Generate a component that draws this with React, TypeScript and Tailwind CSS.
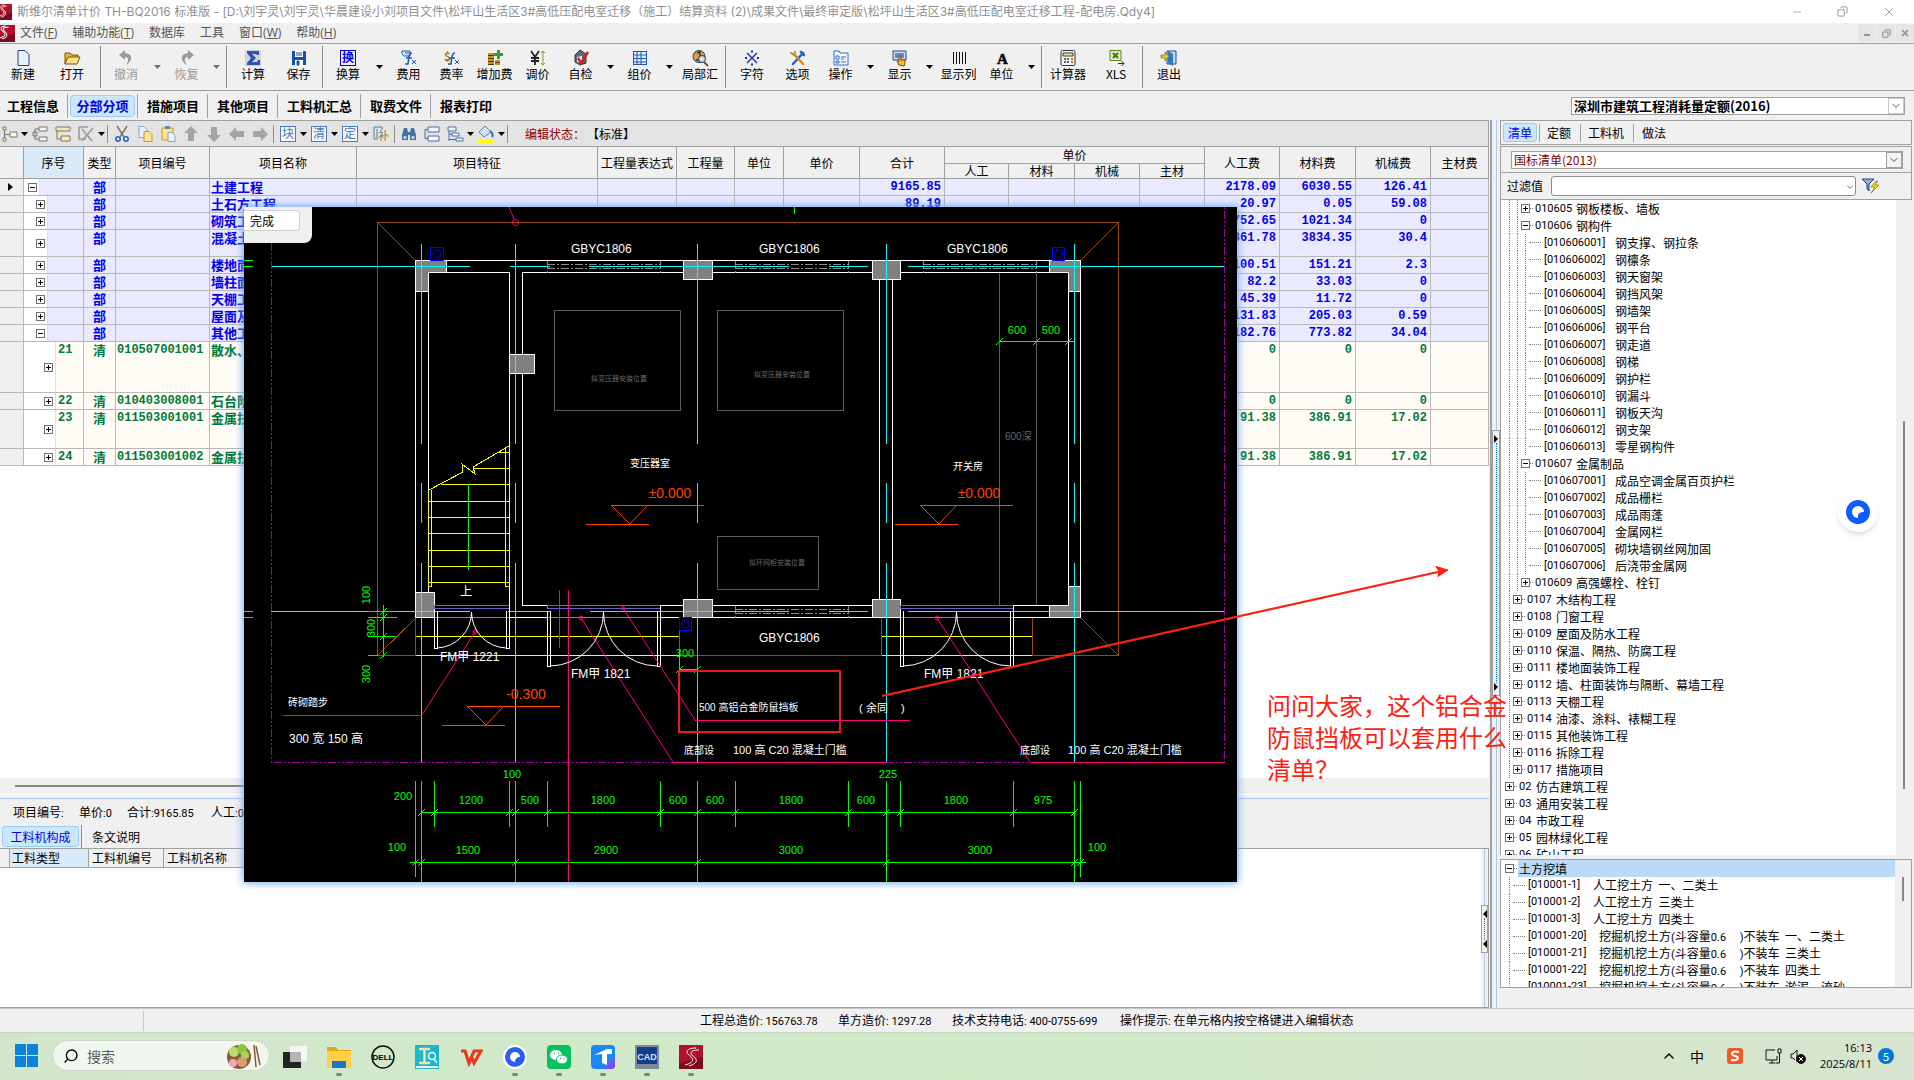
import { Fragment, ReactNode } from "react";
import { ChevronDown, ChevronUp, Search, X, Minus, Copy } from "lucide-react";

const uiFont = "font-['Noto_Sans_CJK_SC',sans-serif]";

/* ---------- shared bits ---------- */

// ASCII runs are set half-width next to the full-width Chinese glyphs
function Mixed({ text }: { text: string }) {
  return (
    <>
      {text.split(/([\x20-\x7e]+)/).map((part, i) =>
        i % 2 ? (
          <span key={i} className="font-['Roboto',sans-serif] text-[11px] whitespace-pre">
            {part}
          </span>
        ) : (
          <Fragment key={i}>{part}</Fragment>
        )
      )}
    </>
  );
}

function Caret({ dim }: { dim?: boolean }) {
  return (
    <svg viewBox="0 0 7 4" className={dim ? "w-[7px] h-1 fill-gray-500" : "w-[7px] h-1 fill-black"}>
      <path d="M0 0h7L3.500 4z" />
    </svg>
  );
}

function Expander({ open }: { open: boolean }) {
  return (
    <button aria-label={open ? "折叠" : "展开"} className="w-[9px] h-[9px] shrink-0 bg-white">
      <svg viewBox="0 0 9 9" className="w-[9px] h-[9px] block" fill="none" shapeRendering="crispEdges">
        <rect x="0.5" y="0.5" width="8" height="8" stroke="#707070" />
        <path d={open ? "M2 4.500h5" : "M2 4.500h5M4.500 2v5"} stroke="#000" />
      </svg>
    </button>
  );
}

function AppLogo({ className }: { className: string }) {
  return (
    <svg viewBox="0 0 16 16" className={className} preserveAspectRatio="none">
      <rect width="16" height="16" fill="#b0122c" />
      <path d="M0 12l16 -4v8H0z" fill="#7d0a1e" />
      <path d="M6 1C0 1 0 4 3 6s4 5 -3 6M9 2C3 2 2 4 5 6s4 6 -3 7" stroke="#fff" fill="none" strokeWidth="1" />
    </svg>
  );
}

/* ---------- toolbar icons ---------- */

const icons: Record<string, ReactNode> = {
  new: <path d="M3 .5h7l4 4v11H3z" fill="#e8f2ff" stroke="#24407c" />,
  open: (
    <g stroke="#7a5200">
      <path d="M1 14V3h5l2 2h6v3" fill="#e9b83a" />
      <path d="M1 14l3-7h12l-3 7z" fill="#ffe08a" />
    </g>
  ),
  undo: <path d="M7 0L1 5l6 5V7c4 0 4 4 1 8 6-3 8-11-1-12z" fill="#9a9a9a" />,
  redo: <path d="M9 0l6 5-6 5V7c-4 0-4 4-1 8C2 12 0 4 9 3z" fill="#9a9a9a" />,
  sum: (
    <g>
      <rect width="16" height="16" fill="#d3d3d3" />
      <path d="M2 1h12v4h-2l-1-1H7l4 4-4 4h5l1-2h2v5H2v-2l4-5-4-5z" fill="#2a55b8" />
    </g>
  ),
  save: (
    <g>
      <path d="M1 1h13l1 1v13H1z" fill="#174fa8" />
      <path d="M4 1h8v6H4zM4 10h8v5H4z" fill="#fff" />
      <path d="M5 3h6M5 5h6M6 11h2v4H6z" stroke="#174fa8" fill="#174fa8" />
    </g>
  ),
  conv: (
    <g>
      <rect x=".5" y=".5" width="15" height="15" fill="#e9f4ff" stroke="#0000e8" />
      <text x="2" y="12" fontSize="12" fontWeight="700" fill="#0000e8">换</text>
    </g>
  ),
  fee: (
    <g fill="none" stroke="#1b57b8">
      <path d="M1 1h8v5H3L1 4zM4 3h4" fill="#dfe9fb" />
      <path d="M11 3c-3 0-3 3-4 11H4M5 8h6" strokeWidth="1.500" />
      <path d="M11 10l4 4M15 10l-4 4" />
    </g>
  ),
  rate: (
    <g fill="none" stroke="#1b57b8">
      <text x="0" y="11" fontSize="12" fontWeight="700" fill="#b87a10" stroke="none">$</text>
      <path d="M11 3c-3 0-3 3-4 11H4M5 8h6" strokeWidth="1.500" />
      <path d="M11 10l4 4M15 10l-4 4" />
    </g>
  ),
  addfee: (
    <g>
      <path d="M10 0h3v3h3v3h-3v3h-3V6H7V3h3z" fill="#3f9440" />
      <path d="M1 4h6M1 7h6M1 10h6M1 13h6M8 11h5M8 14h5" stroke="#c8901c" strokeWidth="2" />
      <path d="M1 5.500h6M1 8.500h6M1 11.500h6M1 14.500h6M8 12.500h5" stroke="#54370a" />
    </g>
  ),
  price: (
    <g fill="none">
      <path d="M1 1l4 6 4-6M5 7v8M1 8h8M1 11h8" stroke="#222" strokeWidth="1.800" />
      <path d="M13 1v14M11 3l2-2 2 2M11 13l2 2 2-2" stroke="#7aa81c" />
    </g>
  ),
  check: (
    <g>
      <path d="M2 5l5-5 6 4v9l-6 2-5-3z" fill="#5b6a86" stroke="#333" />
      <path d="M4 7l5-1v7l-5-1z" fill="#e5e9f2" />
      <path d="M5 8l3 5 7-11" stroke="#d81c1c" strokeWidth="2.500" fill="none" />
    </g>
  ),
  group: (
    <g fill="none" stroke="#1b57b8">
      <rect x="1.500" y="1.500" width="13" height="13" fill="#e4eefc" />
      <path d="M1 5h14M1 8.500h14M1 12h14M5 2v13M9 2v13" />
    </g>
  ),
  local: (
    <g>
      <circle cx="7" cy="6.500" r="6" fill="#d4a14a" stroke="#333" />
      <path d="M5 3l3-1v8M4 10h6" stroke="#333" strokeWidth="1.500" fill="none" />
      <circle cx="10" cy="9" r="3.500" fill="#cfe0f4" stroke="#335" />
      <path d="M12 12l4 4" stroke="#8a4a1c" strokeWidth="2" />
    </g>
  ),
  chars: (
    <g stroke="#16309c" strokeWidth="1.400">
      <path d="M3 3l10 10M13 3L3 13" />
      <path d="M7 1.500h2M7 14.500h2M1 8h2M13 8h2" strokeWidth="2" />
    </g>
  ),
  options: (
    <g fill="none" strokeLinecap="round">
      <path d="M3 14L13 3M11 2l3 3" stroke="#2268b8" strokeWidth="2.500" />
      <path d="M4 4l9 10" stroke="#c8901c" strokeWidth="2.500" />
      <path d="M1 3l3 2 1-3" stroke="#c8901c" strokeWidth="2" />
    </g>
  ),
  action: (
    <g fill="none" stroke="#2e6fc4">
      <path d="M1 15V1h5l1 2h8v12z" fill="#f3f8ff" />
      <path d="M3 6h3v3H3zM3 11h3v2H3zM8 7h5M8 9h3M8 12h5" />
    </g>
  ),
  show: (
    <g>
      <path d="M1 1h13v9H1z" fill="#cfdff6" stroke="#2b3f8c" />
      <path d="M3 3h9v5H3z" fill="#5d8ad6" />
      <path d="M7 15l-2-4 2 0V6h2v4h4v3l-1 3z" fill="#f2b648" stroke="#7a5200" />
    </g>
  ),
  cols: <path d="M2.500 2v12M5.500 2v12M8.500 2v12M11.500 2v12M14.500 2v12" stroke="#111" />,
  unit: (
    <g>
      <text x="3" y="14" fontSize="15" fontWeight="700" fontFamily="Liberation Serif, serif" stroke="#000" strokeWidth=".5">A</text>
    </g>
  ),
  calc: (
    <g>
      <rect x="1" y=".5" width="14" height="15" rx="1.500" fill="#f4f4f4" stroke="#333" />
      <path d="M3 3h10v3H3z" fill="#fbe0a4" stroke="#333" />
      <path d="M4 9h2M7 9h2M4 12h2M7 12h2" stroke="#333" strokeWidth="1.500" />
      <path d="M11 9h2M11 12h2" stroke="#e06a10" strokeWidth="2" />
    </g>
  ),
  xls: (
    <g>
      <path d="M2 .5h11v10H2z" fill="#dcebc0" stroke="#5c8a1c" />
      <path d="M5 3l5 5M10 3L5 8" stroke="#3d7a10" strokeWidth="2" />
      <path d="M10 13.500h6M13.500 11l2.500 2.500-2.500 2.500" stroke="#333" fill="none" />
    </g>
  ),
  exit: (
    <g>
      <path d="M6 1h9v13H6z" fill="#bcd8f2" stroke="#1c4c94" />
      <path d="M7 1l5 3v12l-5-3z" fill="#2c7ac0" />
      <path d="M0 5h4V2l4 4.500L4 11V8H0z" fill="#f2c02c" stroke="#7a5200" strokeWidth=".6" />
    </g>
  ),
};

function Icon({ name }: { name: string }) {
  return (
    <svg viewBox="0 0 16 16" className="w-4 h-4 block overflow-visible">
      {icons[name]}
    </svg>
  );
}

type Tool = { icon?: string; label?: string; w?: string; caret?: boolean; dim?: boolean; sep?: boolean };

const tools: Tool[] = [
  { icon: "new", label: "新建", w: "w-[46px]" },
  { icon: "open", label: "打开", w: "w-[52px]" },
  { sep: true },
  { icon: "undo", label: "撤消", w: "w-[46px]", caret: true, dim: true },
  { icon: "redo", label: "恢复", caret: true, dim: true },
  { sep: true },
  { icon: "sum", label: "计算", w: "w-12" },
  { icon: "save", label: "保存" },
  { sep: true },
  { icon: "conv", label: "换算", w: "w-[46px]", caret: true },
  { icon: "fee", label: "费用" },
  { icon: "rate", label: "费率" },
  { icon: "addfee", label: "增加费" },
  { icon: "price", label: "调价" },
  { icon: "check", label: "自检", caret: true },
  { icon: "group", label: "组价", caret: true },
  { icon: "local", label: "局部汇", w: "w-[46px]" },
  { sep: true },
  { icon: "chars", label: "字符", w: "w-12" },
  { icon: "options", label: "选项" },
  { icon: "action", label: "操作", caret: true },
  { icon: "show", label: "显示", caret: true },
  { icon: "cols", label: "显示列" },
  { icon: "unit", label: "单位", caret: true },
  { sep: true },
  { icon: "calc", label: "计算器", w: "w-12" },
  { icon: "xls", label: "XLS", w: "w-12" },
  { sep: true },
  { icon: "exit", label: "退出", w: "w-12" },
];

function MainToolbar() {
  return (
    <div className="h-[47px] shrink-0 flex items-stretch bg-[#f0f0f0] border-b border-[#a0a0a0]">
      {tools.map((t, i) =>
        t.sep ? (
          <div key={i} className="w-px mx-0.5 my-0.5 bg-[#8c8c8c]" />
        ) : (
          <Fragment key={i}>
            <button
              className={`${t.w ?? "w-[43px]"} pt-1.5 flex flex-col items-center whitespace-nowrap leading-4 ${
                t.dim ? "text-[#9a9a9a]" : ""
              }`}
            >
              <Icon name={t.icon!} />
              {t.label}
            </button>
            {t.caret && (
              <button aria-label={`${t.label}菜单`} className="w-4 flex items-center justify-center">
                <Caret dim={t.dim} />
              </button>
            )}
          </Fragment>
        )
      )}
    </div>
  );
}

/* ---------- edit toolbar ---------- */

const grayArrow = "M8 0l7 7h-4v8H5V7H1z";

const editIcons: Record<string, ReactNode> = {
  tree1: <path d="M1 1h3v3H1zM1 12h3v3H1zM8 6h7v5H8zM2.500 4v8M3 8.500h5" fill="#fff8d8" stroke="#777" />,
  tree2: <path d="M7 1h8v4H7zM7 11h8v4H7zM3 3h4M3 13h4M3 3v10M1 6h4v4H1z" fill="#f4f4f4" stroke="#777" />,
  tree3: <path d="M1 1h14v4H1zM6 10h9v5H6zM2 5v8h4" fill="#fbe7b0" stroke="#777" />,
  del: <path d="M1 1h9M1 1v12h7M4 3l10 12M15 2L4 15" fill="none" stroke="#9a9a9a" strokeWidth="1.600" />,
  cut: (
    <g fill="none">
      <path d="M3 0l7 11M13 0L6 11" stroke="#777" strokeWidth="1.500" />
      <circle cx="4" cy="13" r="2.200" stroke="#2667c0" strokeWidth="1.600" />
      <circle cx="12" cy="13" r="2.200" stroke="#2667c0" strokeWidth="1.600" />
    </g>
  ),
  copy: (
    <g>
      <path d="M2 .5h5l3 3v8H2z" fill="#eaf3ff" stroke="#7ea6d8" />
      <path d="M7 5.500h5l3 3v7H7z" fill="#ffe694" stroke="#c49a28" />
    </g>
  ),
  paste: (
    <g>
      <path d="M2 2h11v12H2z" fill="#fbe48c" stroke="#c49a28" />
      <path d="M5 0h5v3H5z" fill="#4f8ad0" />
      <path d="M8 6.500h4l3 3v6H8z" fill="#eaf3ff" stroke="#7ea6d8" />
    </g>
  ),
  up: <path d={grayArrow} fill="#a4a4a4" />,
  down: <path d={grayArrow} fill="#a4a4a4" transform="rotate(180 8 8)" />,
  left: <path d={grayArrow} fill="#a4a4a4" transform="rotate(270 8 8)" />,
  right: <path d={grayArrow} fill="#a4a4a4" transform="rotate(90 8 8)" />,
  find: (
    <g fill="#47709f">
      <path d="M3 2h3l1 4v8H1V9zM10 2h3l2 7v5H9V6zM6 6h4v3H6z" />
      <path d="M2.500 10h3v3h-3zM10.500 10h3v3h-3z" fill="#bcd2ea" />
    </g>
  ),
  rows: <path d="M4 1h11v5H4zM4 10h11v5H4zM1 3.500h3M1 3.500v9M1 12.500h3" fill="#f1f6fd" stroke="#4a6ea8" />,
  levels: <path d="M1 1h8v4H1zM5 7h7v3H5zM9 12h7v3H9zM2 5v10M2 8h3M2 13.500h7" fill="#f1f6fd" stroke="#4a6ea8" />,
  fill: (
    <g>
      <path d="M7 0L1 6l5 5 7-5z" fill="#d4e2f2" stroke="#5c7ea8" />
      <path d="M12 5c3 2 3 5 2 6" stroke="#2667c0" strokeWidth="2" fill="none" />
      <path d="M0 13h16v4H0z" fill="#ffff00" />
    </g>
  ),
};

function glyphIcon(ch: string) {
  return (
    <g>
      <rect x=".5" y=".5" width="15" height="15" fill="#f3f8ff" stroke="#4d7cb8" />
      <text x="2" y="12" fontSize="12" fill="#4d7cb8">{ch}</text>
    </g>
  );
}
editIcons.block = glyphIcon("块");
editIcons.list = glyphIcon("清");
editIcons.quota = glyphIcon("定");
editIcons.patch = (
  <g>
    <path d="M1 1h8v3M1 1v12h4M4 3v9" fill="none" stroke="#4d7cb8" />
    <rect x="5" y="4" width="11" height="12" rx="4" fill="#fbe7a0" />
    <text x="5" y="14" fontSize="11" fill="#4d7cb8">补</text>
  </g>
);

const editTools = [
  "tree1", "v", "tree2", "tree3", "del", "v", "|", "cut", "copy", "paste", "up", "down", "left", "right", "|",
  "block", "v", "list", "v", "quota", "v", "patch", "|", "find", "rows", "levels", "v", "fill", "v", "|",
];

function EditToolbar() {
  return (
    <div className="h-[27px] shrink-0 flex items-center bg-[#e3e3e3] border border-l-0 border-[#a0a0a0]">
      {editTools.map((t, i) =>
        t === "|" ? (
          <div key={i} className="w-px h-[18px] mx-[2px] bg-[#8c8c8c]" />
        ) : t === "v" ? (
          <button key={i} aria-label="更多" className="w-2 h-5 flex items-center justify-center">
            <Caret />
          </button>
        ) : (
          <button
            key={i}
            aria-label={t}
            className={`${i === 0 ? "w-5" : "w-[23px]"} h-5 flex items-center justify-center`}
          >
            <svg viewBox="0 0 16 16" className="w-4 h-4 overflow-visible">
              {editIcons[t]}
            </svg>
          </button>
        )
      )}
      <span className="ml-[15px] text-[#900000]">编辑状态：</span>
      <span className="ml-[2px]">【标准】</span>
    </div>
  );
}

/* ---------- main grid ---------- */

const colWidths = [
  "w-6", "w-[60px]", "w-8", "w-[94px]", "w-[147px]", "w-[241px]", "w-[79px]", "w-[58px]", "w-[49px]", "w-[76px]",
  "w-[85px]", "w-16", "w-[66px]", "w-[65px]", "w-[65px]", "w-[75px]", "w-[76px]", "w-[75px]", "",
];

interface Row {
  level: number;
  open?: boolean;
  no?: string;
  code?: string;
  name: string;
  total?: string;
  labor: string;
  material: string;
  machine: string;
  h?: string;
}

const rows: Row[] = [
  { level: 0, open: true, name: "土建工程", total: "9165.85", labor: "2178.09", material: "6030.55", machine: "126.41" },
  { level: 1, name: "土石方工程", total: "89.19", labor: "20.97", material: "0.05", machine: "59.08" },
  { level: 1, name: "砌筑工程", labor: "752.65", material: "1021.34", machine: "0" },
  { level: 1, name: "混凝土工程", labor: "861.78", material: "3834.35", machine: "30.4", h: "h-[26px]" },
  { level: 1, name: "楼地面工程", labor: "100.51", material: "151.21", machine: "2.3" },
  { level: 1, name: "墙柱面工程", labor: "82.2", material: "33.03", machine: "0" },
  { level: 1, name: "天棚工程", labor: "45.39", material: "11.72", machine: "0" },
  { level: 1, name: "屋面及防水", labor: "131.83", material: "205.03", machine: "0.59" },
  { level: 1, open: true, name: "其他工程", labor: "182.76", material: "773.82", machine: "34.04" },
  { level: 2, no: "21", code: "010507001001", name: "散水、坡道", labor: "0", material: "0", machine: "0", h: "h-[50px]" },
  { level: 2, no: "22", code: "010403008001", name: "石台阶", labor: "0", material: "0", machine: "0" },
  { level: 2, no: "23", code: "011503001001", name: "金属扶手", labor: "91.38", material: "386.91", machine: "17.02", h: "h-[38px]" },
  { level: 2, no: "24", code: "011503001002", name: "金属扶手", labor: "91.38", material: "386.91", machine: "17.02" },
];

const indent = ["pl-1 w-4", "pl-3 w-6", "pl-5 w-8"];

function CostGrid() {
  const th = "border-r border-b border-[#a0a0a0] font-normal p-0 overflow-hidden whitespace-nowrap";
  const td = "border-r border-b border-[#b8b8b8] p-0 align-top leading-4 overflow-hidden whitespace-nowrap";
  const num = `${td} text-right pr-[3px] text-xs font-['Liberation_Mono',monospace]`;

  return (
    <div className="flex-1 min-h-0 overflow-hidden bg-white">
      <table className="w-full table-fixed border-separate border-spacing-0">
        <colgroup>
          {colWidths.map((w, i) => (
            <col key={i} className={w} />
          ))}
        </colgroup>
        <thead className="bg-[#f0f0f0]">
          <tr className="h-[17px]">
            <th rowSpan={2} className={th} aria-label="行" />
            <th rowSpan={2} className={`${th} bg-[#d9eaf8]`}>序号</th>
            {["类型", "项目编号", "项目名称", "项目特征", "工程量表达式", "工程量", "单位", "单价", "合计"].map((h) => (
              <th key={h} rowSpan={2} className={th}>
                {h}
              </th>
            ))}
            <th colSpan={4} className={`${th} leading-4`}>单价</th>
            {["人工费", "材料费", "机械费", "主材费"].map((h) => (
              <th key={h} rowSpan={2} className={th}>
                {h}
              </th>
            ))}
          </tr>
          <tr className="h-[15px]">
            {["人工", "材料", "机械", "主材"].map((h) => (
              <th key={h} className={`${th} leading-[14px]`}>
                {h}
              </th>
            ))}
          </tr>
        </thead>
        <tbody className="font-bold text-[13px]">
          {rows.map((r, i) => (
            <tr key={i} className={r.level === 2 ? "bg-[#fffcf5] text-[#007a3c]" : "bg-[#e9e9ff] text-[#0000f0]"}>
              <td className={`${td} bg-[#f0f0f0] border-[#a0a0a0]`}>
                {i === 0 && (
                  <svg viewBox="0 0 5 8" className="w-[5px] h-2 mt-1 ml-2">
                    <path d="M0 0l5 4-5 4z" />
                  </svg>
                )}
              </td>
              <td className={td}>
                <div className={`flex ${r.h ?? "h-4"}`}>
                  <div className={`${indent[r.level]} bg-white flex items-center border-r border-[#e0e0e0]`}>
                    <Expander open={!!r.open} />
                  </div>
                  <span className="pl-[2px] text-xs leading-4 font-['Liberation_Mono',monospace]">{r.no}</span>
                </div>
              </td>
              <td className={`${td} text-center`}>{r.level === 2 ? "清" : "部"}</td>
              <td className={`${td} pl-px text-xs font-['Liberation_Mono',monospace]`}>{r.code}</td>
              <td className={`${td} pl-px`}>{r.name}</td>
              <td className={td} />
              <td className={td} />
              <td className={td} />
              <td className={td} />
              <td className={td} />
              <td className={num}>{r.total}</td>
              <td className={td} />
              <td className={td} />
              <td className={td} />
              <td className={td} />
              <td className={num}>{r.labor}</td>
              <td className={num}>{r.material}</td>
              <td className={num}>{r.machine}</td>
              <td className={td} />
            </tr>
          ))}
        </tbody>
      </table>
    </div>
  );
}

function DetailPane() {
  return (
    <div className="shrink-0 bg-[#f0f0f0]">
      <div className="h-4 pt-[7px] pl-[15px]">
        <div className="h-[2px] w-3/4 bg-[#858585]" />
      </div>
      <div className="h-px bg-white" />
      <div className="h-[4px] border-b border-[#a6caf0]" />
      <p className="h-[26px] leading-[26px] pl-[13px] flex">
        <span className="w-[66px]"><Mixed text="项目编号:" /></span>
        <span className="w-12"><Mixed text="单价:0" /></span>
        <span className="w-[84px]"><Mixed text="合计:9165.85" /></span>
        <span><Mixed text="人工:0" /></span>
      </p>
      <div className="h-6 flex items-center border-b border-[#a0a0a0]">
        <button className="ml-[2px] h-[21px] w-[77px] rounded-[3px] border border-[#99cdf5] bg-[#cce6fb] text-[#0000f0]">
          工料机构成
        </button>
        <div className="w-px h-full ml-[2px] bg-[#8c8c8c]" />
        <button className="ml-2.5">条文说明</button>
      </div>
      <div className="h-[159px] flex">
        <div className="flex-1 bg-white border-b border-[#a0a0a0]">
          <table className="w-[740px] table-fixed border-separate border-spacing-0 bg-[#f0f0f0] leading-[18px]">
            <thead>
              <tr className="text-left">
                <th className="w-2.5 p-0 border-r border-b border-[#a0a0a0]" aria-label="行" />
                <th className="w-[79px] p-0 pl-[2px] font-normal border-r border-b border-[#a0a0a0] bg-[#d9eaf8]">工料类型</th>
                <th className="w-[75px] p-0 pl-[3px] font-normal border-r border-b border-[#a0a0a0]">工料机编号</th>
                <th className="p-0 pl-[3px] font-normal border-b border-[#a0a0a0]">工料机名称</th>
              </tr>
            </thead>
          </table>
        </div>
        <div className="w-2 flex flex-col items-center bg-[#f0f0f0] border-r border-b border-[#a0a0a0]">
          <div className="w-px h-14 bg-[#a6caf0]" />
          <button aria-label="展开侧栏" className="w-[7px] h-12 flex flex-col items-center justify-between py-1 border border-[#a0a0a0]">
            <svg viewBox="0 0 4 8" className="w-1 h-2"><path d="M4 0L0 4l4 4z" /></svg>
            <div className="flex-1 border-l border-dotted border-[#0078d7]" />
            <svg viewBox="0 0 4 8" className="w-1 h-2"><path d="M4 0L0 4l4 4z" /></svg>
          </button>
          <div className="w-px flex-1 bg-[#a6caf0]" />
        </div>
      </div>
    </div>
  );
}

function Splitter() {
  return (
    <div className="w-2.5 shrink-0 flex flex-col items-center bg-[#f0f0f0] border-l-2 border-[#a0a0a0]">
      <div className="w-px h-[310px] bg-[#a6caf0]" />
      <button aria-label="收起面板" className="w-2 h-[266px] flex flex-col items-center justify-between py-1 border border-[#a0a0a0]">
        <svg viewBox="0 0 4 8" className="w-1 h-2"><path d="M0 0l4 4-4 4z" /></svg>
        <div className="flex-1 border-l border-dotted border-[#0078d7]" />
        <svg viewBox="0 0 4 8" className="w-1 h-2"><path d="M0 0l4 4-4 4z" /></svg>
      </button>
      <div className="w-px flex-1 bg-[#a6caf0]" />
    </div>
  );
}

/* ---------- right hand catalogue ---------- */

interface Node {
  level: number;
  code?: string;
  name: string;
  open?: boolean;
  leaf?: boolean;
  active?: boolean;
}

const leaves = (prefix: string, names: string[]): Node[] =>
  names.map((name, i) => ({ level: 3, leaf: true, code: `[${prefix}${String(i + 1).padStart(3, "0")}]`, name }));

const catalogue: Node[] = [
  { level: 2, code: "010605", name: "钢板楼板、墙板" },
  { level: 2, code: "010606", name: "钢构件", open: true },
  ...leaves("010606", [
    "钢支撑、钢拉条", "钢檩条", "钢天窗架", "钢挡风架", "钢墙架", "钢平台", "钢走道", "钢梯", "钢护栏", "钢漏斗",
    "钢板天沟", "钢支架", "零星钢构件",
  ]),
  { level: 2, code: "010607", name: "金属制品", open: true },
  ...leaves("010607", ["成品空调金属百页护栏", "成品栅栏", "成品雨蓬", "金属网栏", "砌块墙钢丝网加固", "后浇带金属网"]),
  { level: 2, code: "010609", name: "高强螺栓、栓钉" },
  { level: 1, code: "0107", name: "木结构工程" },
  { level: 1, code: "0108", name: "门窗工程" },
  { level: 1, code: "0109", name: "屋面及防水工程" },
  { level: 1, code: "0110", name: "保温、隔热、防腐工程" },
  { level: 1, code: "0111", name: "楼地面装饰工程" },
  { level: 1, code: "0112", name: "墙、柱面装饰与隔断、幕墙工程" },
  { level: 1, code: "0113", name: "天棚工程" },
  { level: 1, code: "0114", name: "油漆、涂料、裱糊工程" },
  { level: 1, code: "0115", name: "其他装饰工程" },
  { level: 1, code: "0116", name: "拆除工程" },
  { level: 1, code: "0117", name: "措施项目" },
  { level: 0, code: "02", name: "仿古建筑工程" },
  { level: 0, code: "03", name: "通用安装工程" },
  { level: 0, code: "04", name: "市政工程" },
  { level: 0, code: "05", name: "园林绿化工程" },
  { level: 0, code: "06", name: "矿山工程" },
];

const quotas: Node[] = [
  { level: 0, name: "土方挖填", open: true, active: true },
  { level: 1, leaf: true, code: "[010001-1]", name: "人工挖土方  一、二类土" },
  { level: 1, leaf: true, code: "[010001-2]", name: "人工挖土方  三类土" },
  { level: 1, leaf: true, code: "[010001-3]", name: "人工挖土方  四类土" },
  { level: 1, leaf: true, code: "[010001-20]", name: "挖掘机挖土方(斗容量0.6     )不装车  一、二类土" },
  { level: 1, leaf: true, code: "[010001-21]", name: "挖掘机挖土方(斗容量0.6     )不装车  三类土" },
  { level: 1, leaf: true, code: "[010001-22]", name: "挖掘机挖土方(斗容量0.6     )不装车  四类土" },
  { level: 1, leaf: true, code: "[010001-23]", name: "挖掘机挖土方(斗容量0.6     )不装车  淤泥、流砂" },
];

function Tree({ nodes }: { nodes: Node[] }) {
  return (
    <ul className="flex-1 min-w-0 pl-1 overflow-hidden">
      {nodes.map((n, i) => (
        <li key={i} className="h-[17px] flex items-center whitespace-pre leading-[17px]">
          {Array.from({ length: n.level }, (_, k) => (
            <span key={k} className="w-2 h-full flex justify-center shrink-0">
              <span className="border-l border-dotted border-[#808080]" />
            </span>
          ))}
          {n.leaf ? (
            <span className="w-3 mr-[2px] border-t border-dotted border-[#808080] shrink-0" />
          ) : (
            <>
              <Expander open={!!n.open} />
              <span className="w-[3px] mr-px border-t border-dotted border-[#808080] shrink-0" />
            </>
          )}
          <span className={`flex pl-px ${n.active ? "flex-1 bg-[#bbdaf7]" : ""}`}>
            {n.code && (
              <span
                className="shrink-0 font-['Roboto',sans-serif] text-[11px]"
                style={{ width: (n.code.length + 1) * 6 - 1 }}
              >
                {n.code}
              </span>
            )}
            <span>
              <Mixed text={n.name} />
            </span>
          </span>
        </li>
      ))}
    </ul>
  );
}

function CataloguePanel() {
  return (
    <aside className="w-[414px] shrink-0 flex flex-col bg-[#f0f0f0] pr-[2px] pb-5">
      <div className="h-[25px] shrink-0 flex items-center border border-[#a0a0a0] mb-px">
        <button className="ml-[2px] w-[34px] h-[19px] rounded-[3px] border border-[#99cdf5] bg-[#cce6fb] text-[#0000f0]">清单</button>
        {[["定额", "w-[38px]"], ["工料机", "w-[50px]"], ["做法", "w-10"]].map(([t, w]) => (
          <Fragment key={t}>
            <div className="w-px h-[18px] ml-[2px] bg-[#a0a0a0]" />
            <button className={w}>{t}</button>
          </Fragment>
        ))}
      </div>
      <div className="h-[26px] shrink-0 flex items-center border border-[#a0a0a0] border-b-0 pr-2 pl-2.5">
        <div className="relative w-full">
          <select aria-label="清单" className="w-full h-[18px] pl-[2px] appearance-none bg-white border border-[#a0a0a0] text-[#800000]">
            <option>国标清单(2013)</option>
          </select>
          <span className="absolute right-px top-px h-4 w-4 border border-[#a0a0a0] bg-[#f4f4f4] flex items-center justify-center pointer-events-none">
            <ChevronDown size={12} color="#555" />
          </span>
        </div>
      </div>
      <div className="h-[28px] shrink-0 flex items-center border border-[#a0a0a0] px-1.5">
        <label htmlFor="filter">过滤值</label>
        <div className="relative ml-2 w-[305px]">
          <input id="filter" className="w-full h-5 bg-white border border-[#8c8c8c] rounded-[3px] px-1 block" />
          <ChevronDown size={10} color="#555" className="absolute right-px top-[6px]" />
        </div>
        <button aria-label="过滤" className="ml-1.5">
          <svg viewBox="0 0 17 16" className="w-[17px] h-4 block">
            <path d="M0 1h12L7 6v7l-2-2V6z" fill="#8fb0dc" stroke="#1c3f80" />
            <path d="M14 3l-5 6h4l-4 6 8-8h-4l3-4z" fill="#ffe000" stroke="#6a6000" strokeWidth=".6" />
          </svg>
        </button>
      </div>
      <div className="flex-1 min-h-0 flex bg-white overflow-hidden border-l border-[#a0a0a0]">
        <Tree nodes={catalogue} />
        <div className="w-4 bg-[#f0f0f0] flex justify-center">
          <div className="w-[2px] h-[368px] mt-[221px] bg-[#858585]" />
        </div>
      </div>
      <div className="h-[129px] shrink-0 mt-1 flex bg-white overflow-hidden border border-[#a0a0a0]">
        <Tree nodes={quotas} />
        <div className="w-4 bg-[#f0f0f0] flex justify-center">
          <div className="w-[2px] h-6 mt-[17px] bg-[#858585]" />
        </div>
      </div>
    </aside>
  );
}

/* ---------- pinned floor plan ---------- */

// label, centre x, baseline
const dims: [string, number, number][] = [
  ["600", 1017, 334], ["500", 1051, 334], ["300", 685, 657],
  ["100", 512, 778], ["225", 888, 778],
  ["200", 403, 800], ["1200", 471, 804], ["500", 530, 804], ["1800", 603, 804], ["600", 678, 804], ["600", 715, 804],
  ["1800", 791, 804], ["600", 866, 804], ["1800", 956, 804], ["975", 1043, 804],
  ["100", 397, 851], ["1500", 468, 854], ["2900", 606, 854], ["3000", 791, 854], ["3000", 980, 854], ["100", 1097, 851],
];
const ticks: [number, number][] = [
  ...[999, 1036, 1068].map((x): [number, number] => [x, 341]),
  ...[421, 434, 509, 515, 547, 660, 697, 735, 848, 886, 900, 1013, 1074].map((x): [number, number] => [x, 812]),
  ...[415, 421, 515, 697, 886, 1074, 1080].map((x): [number, number] => [x, 862]),
  ...[611, 617, 636, 655].map((y): [number, number] => [383, y]),
  [679, 669], [697, 669],
];
const windows: [number, number][] = [[547, 264], [735, 264], [923, 264], [735, 609]];
const doors = [
  { x: 434, w: 75, r: 36 },
  { x: 547, w: 113, r: 54 },
  { x: 900, w: 113, r: 54 },
];
const levels: [string, number, number][] = [["±0.000", 611, 505], ["±0.000", 920, 505], ["-0.300", 467, 706]];

function FloorPlan() {
  return (
    <svg viewBox="244 207 993 675" className="w-full h-full block" fill="none">
      <g shapeRendering="crispEdges">
        <path d="M271.500 207V762.500H1224.500V207" stroke="#a000a0" strokeDasharray="8 2 2 2 2 2" />
        <path d="M377.500 655.500V222.500H1118.500V655.500H1032M377.500 655.500H416M679 655.500H882M415.500 618v37M679.500 618v37M881.500 618v37M1032.500 618v37" stroke="#964b00" />
        <path d="M378 223l38 38M1118 223l-38 38M378 655l38-37M1081 618l37 37" stroke="#964b00" />
        <path d="M416 636.500H679M416 655.500H679M882 636.500h150M882 655.500h150" stroke="#ff0" />

        {/* equipment outlines */}
        <path d="M554.500 310.500h126v100h-126zM717.500 310.500h126v100h-126zM717.500 536.500h101v53h-101zM999.500 273V605M1036.500 273V605" stroke="#5c5c5c" />

        {/* walls */}
        <path
          stroke="#fff"
          d="M415.500 592V260.500H1080.500V617.500M428.500 592V272.500H509.500V605M522.500 605V272.500H1068.500V587M879.500 279V599M892.500 279V599M522 605.500h25M661 605.500h22M713 605.500h159M1013 605.500h55M509 617.500h38M661 617.500h211M1013 617.500h36M509.500 605.500v12"
        />
        <path d="M435 617.500h74M547 617.500h113M900 617.500h113" stroke="#888" />
        <g fill="#808080" stroke="#fff">
          <path d="M415.500 260.500h31v12h-18v19h-13zM1080.500 260.500h-31v12h19v19h12zM1068.500 586.500h12v31h-31v-12h19z" />
          <path d="M509.500 354.500h25v19h-25zM683.500 260.500h29v19h-29zM872.500 260.500h28v19h-28zM415.500 592.500h19v25h-19zM683.500 599.500h29v18h-29zM872.500 599.500h28v18h-28z" />
        </g>
        {windows.map(([x, y]) => (
          <path
            key={`${x}-${y}`}
            d={`M${x} ${y + 0.5}h113M${x} ${y + 4.5}h113M${x + 0.5} ${y - 3}v12M${x + 113.5} ${y - 3}v12`}
            stroke="#8a8a8a"
            strokeDasharray="8 2 2 2"
          />
        ))}
        <path d="M434.500 605.500h75v3h-75zM547.500 605.500h113v3h-113zM900.500 605.500h113v3h-113z" stroke="#6262c8" />

        {/* axes */}
        <path
          stroke="#0ff"
          d="M272 266.500H470M510 266.500h40M589 266.500H789M829 266.500h39M908 266.500h316M271 611.500H470M508 611.500h42M590 611.500H789M829 611.500h39M908 611.500h316"
        />
        {[421.5, 515.5, 697.5, 886.5, 1074.5].map((x) => (
          <path key={x} stroke="#0ff" d={`M${x} 244V444M${x} 483V523M${x} 563V762`} />
        ))}

        {/* stairs */}
        <path
          stroke="#ff0"
          d="M428.500 490V586h3V490M509.500 446V586h-4V448M498 452.500h11M473 468.500h36M441 484.500h68M428 501.500h81M428 517.500h81M428 533.500h81M428 550.500h81M428 566.500h81M428 582.500h81M428 490.500L463 472l-1-8 13 10-2-7 36-21"
        />
        <path
          stroke="#0f0"
          d="M468.500 484V570M244 260.500h9M244 266.500h9M244 611.500h9M244 617.500h9M794.500 207v7M999 341.500h75M383.500 605V657M368 611.500h29M368 617.500h29M368 636.500h28M368 655.500h10M679.500 650v20M697.500 650v35M679 669.500h18M421 812.500h653M410 862.500h676"
        />
        <path
          stroke="#0f0"
          d="M434.500 781v46M509.500 781v46M547.500 781v46M660.500 781v46M735.500 781v46M848.500 781v46M900.500 781v46M1013.500 781v46M415.500 781v96M1080.500 781v96M421.500 781V882M515.500 781V882M697.500 781V882M886.500 781V882M1074.500 781V882"
        />
        <path d={ticks.map(([x, y]) => `M${x - 3} ${y + 4}l7-7`).join("")} stroke="#0f0" />

        <path d="M430.500 247.500h13v13h-13zM1052.500 247.500h12v13h-12zM679.500 617.500h12v13h-12z" stroke="#00f" />
        {doors.map((d) => (
          <path
            key={d.x}
            stroke="#fff"
            d={`M${d.x + 0.5} 611V${612.5 + d.r}h3V611M${d.x + d.w + 0.5} 605V${612.5 + d.r}h-3V611`}
          />
        ))}
        <path d="M559.500 590v58M568.500 590V882M283 715.500h139M673 762.500h213M695 720.500h215M1030 762.500h194" stroke="#ff0080" />
      </g>

      <path d="M509 207l5 12M475 632l-53 83M581 618l92 144M623 608l72 112M937 618l93 144" stroke="#ff0080" />
      <g stroke="#ff0080">
        <circle cx="515.5" cy="222.5" r="3" />
        <circle cx="475" cy="632" r="2" />
        <circle cx="581" cy="618" r="2" />
        <circle cx="623" cy="608" r="1.5" />
        <circle cx="937" cy="618" r="2" />
      </g>
      <g stroke="#00f">
        <circle cx="437" cy="254" r="4" />
        <circle cx="1058.5" cy="254" r="4" />
        <circle cx="685.5" cy="624" r="4" />
      </g>
      {doors.map((d) => (
        <path
          key={d.x}
          stroke="#fff"
          d={`M${d.x + 3} ${612 + d.r}A${d.r} ${d.r} 0 0 0 ${d.x + d.w / 2} 612A${d.r} ${d.r} 0 0 0 ${d.x + d.w - 3} ${612 + d.r}`}
        />
      ))}

      <g stroke="#ff4000">
        {levels.map(([, x, y]) => (
          <path key={x} d={`M${x} ${y + 0.5}h93M${x} ${y}l19 19 18-19M${x - 25} ${y + 19.5}h63`} />
        ))}
      </g>
      <g fill="#ff4000" fontSize="14">
        {levels.map(([t, x, y]) => (
          <text key={x} x={x + 59} y={y - 7} textAnchor="middle">
            {t}
          </text>
        ))}
      </g>

      <g fill="#0f0" fontSize="11" textAnchor="middle">
        {dims.map(([t, x, y], i) => (
          <text key={i} x={x} y={y}>
            {t}
          </text>
        ))}
        <text transform="translate(370 595) rotate(-90)">100</text>
        <text transform="translate(375 628) rotate(-90)">300</text>
        <text transform="translate(370 674) rotate(-90)">300</text>
      </g>

      <g fill="#686868" fontSize="7">
        <text x="591" y="381">拟变压器安装位置</text>
        <text x="754" y="377">拟变压器安装位置</text>
        <text x="749" y="565">拟环网柜安装位置</text>
        <text x="1005" y="440" fontSize="10">600深</text>
      </g>

      <g fill="#fff" fontSize="12">
        <text x="571" y="253">GBYC1806</text>
        <text x="759" y="253">GBYC1806</text>
        <text x="947" y="253">GBYC1806</text>
        <text x="759" y="642">GBYC1806</text>
        <text x="440" y="661">FM甲 1221</text>
        <text x="571" y="678">FM甲 1821</text>
        <text x="924" y="678">FM甲 1821</text>
        <text x="289" y="743">300 宽 150 高</text>
        <text x="460" y="596">上</text>
      </g>
      <g fill="#fff" fontSize="10">
        <text x="630" y="467">变压器室</text>
        <text x="953" y="470">开关房</text>
        <text x="288" y="706">砖砌踏步</text>
        <text x="699" y="711">500 高铝合金防鼠挡板</text>
        <text x="684" y="754">底部设</text>
        <text x="1020" y="754">底部设</text>
      </g>
      <g fill="#fff" fontSize="11">
        <text x="859" y="712">(</text>
        <text x="866" y="712">余同</text>
        <text x="901" y="712">)</text>
        <text x="733" y="754">100 高 C20 混凝土门槛</text>
        <text x="1068" y="754">100 高 C20 混凝土门槛</text>
      </g>
      <rect x="679" y="671" width="161" height="61" stroke="#f01820" strokeWidth="2" />
    </svg>
  );
}

function PinnedShot() {
  return (
    <div className="absolute left-[244px] top-[207px] w-[993px] h-[675px] bg-black shadow-[0_0_8px_1px_#6aa8f0] font-['Liberation_Sans','Noto_Sans_CJK_SC',sans-serif]">
      <FloorPlan />
      <div className="absolute left-0 top-0 w-[68px] h-9 bg-[#f0f0f0] rounded-br-lg">
        <button className={`mt-[3px] w-14 h-[21px] pl-1.5 text-left bg-white border border-l-0 border-[#d0d0d0] rounded-r block ${uiFont}`}>
          完成
        </button>
      </div>
    </div>
  );
}

function Annotation() {
  return (
    <>
      <svg viewBox="0 0 570 136" className="absolute left-[880px] top-[565px] w-[570px] h-[136px] pointer-events-none" fill="#ff2010">
        <path d="M2 131L560 6.500" stroke="#ff2010" strokeWidth="2.200" />
        <path d="M568 5L556 1.500l3 5-1 5z" stroke="#ff2010" />
      </svg>
      <p className="absolute left-[1267px] top-[689px] w-[240px] text-2xl leading-8 text-[#ff2010]">
        问问大家，这个铝合金防鼠挡板可以套用什么清单？
      </p>
      <button aria-label="助手" className="absolute right-9 top-[492px] w-10 h-10 rounded-full bg-white shadow-md flex items-center justify-center">
        <svg viewBox="0 0 24 24" className="w-6 h-6">
          <circle cx="12" cy="12" r="12" fill="#0f5cff" />
          <circle cx="12" cy="12" r="6" fill="#fff" />
          <path d="M12 18v-2c0-2 2-4 6-4v6z" fill="#0f5cff" />
        </svg>
      </button>
    </>
  );
}

/* ---------- task bar ---------- */

const apps: { name: string; running?: boolean; art: ReactNode }[] = [
  {
    name: "任务视图",
    art: (
      <g>
        <path d="M7 1h17v15H7z" fill="#f6f6f6" />
        <path d="M0 7h18v16H0z" fill="#222" />
        <path d="M7 7h11v10H7z" fill="#b4b4b4" />
      </g>
    ),
  },
  {
    name: "文件资源管理器",
    running: true,
    art: (
      <g>
        <path d="M0 2h9l2 3h13v18H0z" fill="#e8a317" />
        <path d="M0 6h24v17H0z" fill="#ffcf48" />
        <path d="M5 16h14v7H5z" fill="#1976c8" />
      </g>
    ),
  },
  {
    name: "Dell",
    art: (
      <g>
        <circle cx="12" cy="12" r="11" fill="none" stroke="#111" strokeWidth="1.500" />
        <text x="12" y="15" textAnchor="middle" fontSize="8" fontWeight="700" fontFamily="Liberation Sans, sans-serif">DELL</text>
      </g>
    ),
  },
  {
    name: "清单查询",
    art: (
      <g>
        <path d="M0 0h24v24H0z" fill="#1fb5cf" />
        <path d="M1 21h22v2H1z" fill="#eee" />
        <path d="M4 4h11M4 18h11M9.500 4v14" stroke="#f3e6a8" strokeWidth="2.500" />
        <circle cx="17" cy="11" r="3.500" fill="none" stroke="#dff" strokeWidth="1.500" />
        <path d="M19 14l3 4" stroke="#dff" strokeWidth="1.500" />
      </g>
    ),
  },
  {
    name: "WPS",
    art: (
      <g fill="none" stroke="#e8391c" strokeWidth="3.200">
        <path d="M2 6h4l4 12 5-12M12 11l3 7 7-12h-8" />
      </g>
    ),
  },
  {
    name: "浏览器",
    running: true,
    art: (
      <g>
        <circle cx="12" cy="12" r="12" fill="#fff" />
        <circle cx="12" cy="12" r="10" fill="#2a5df5" />
        <circle cx="12" cy="12" r="5" fill="#fff" />
        <path d="M12 17c0-3 2-5 5-5v5z" fill="#2a5df5" />
      </g>
    ),
  },
  {
    name: "微信",
    running: true,
    art: (
      <g>
        <rect width="24" height="24" rx="4" fill="#07c160" />
        <ellipse cx="9" cy="10" rx="6" ry="5" fill="#fff" />
        <ellipse cx="15" cy="14.500" rx="5.500" ry="4.500" fill="#fff" stroke="#07c160" />
        <path d="M7 8.500h1M11 8.500h1M13 13.500h1M16.500 13.500h1" stroke="#07c160" strokeWidth="1.500" />
      </g>
    ),
  },
  {
    name: "腾讯文档",
    running: true,
    art: (
      <g>
        <rect width="24" height="24" rx="4" fill="#1f86fa" />
        <path d="M24 12v8a4 4 0 0 1-4 4h-7z" fill="#7a4df0" />
        <path d="M3 10L16 4h5v5h-5v11l-5-2V9z" fill="#fff" />
      </g>
    ),
  },
  {
    name: "CAD",
    running: true,
    art: (
      <g>
        <rect width="24" height="24" fill="#7e8a98" />
        <rect x="2" y="2" width="20" height="17" fill="#103f8c" />
        <text x="12" y="15" textAnchor="middle" fontSize="9" fontWeight="700" fill="#cfe6ff" fontFamily="Liberation Sans, sans-serif">CAD</text>
      </g>
    ),
  },
  {
    name: "斯维尔",
    running: true,
    art: (
      <g>
        <rect width="24" height="24" fill="#b0122c" />
        <path d="M0 18l24-6v12H0z" fill="#7d0a1e" />
        <path d="M17 3C8 3 6 7 10 10s7 7-4 10M20 5c-8 0-10 3-6 6s6 7-4 10" stroke="#fff" fill="none" />
      </g>
    ),
  },
];

function TaskBar() {
  return (
    <footer className="h-12 shrink-0 flex items-center bg-gradient-to-r from-[#d3e6cd] via-[#cfebc6] to-[#d8e4cf] border-t border-[#c4d6bd] pl-[15px] pr-5 pb-[2px]">
      <button aria-label="开始">
        <svg viewBox="0 0 23 23" className="w-[23px] h-[23px] block">
          <path d="M0 0h11v11H0zM12 0h11v11H12zM0 12h11v11H0zM12 12h11v11H12z" fill="#0a83dc" />
        </svg>
      </button>
      <div className="ml-3.5 w-[218px] h-[31px] rounded-full bg-[#f1f7ee] border border-[#c9d8c3] flex items-center pl-2.5 pr-2">
        <Search size={16} strokeWidth={2} className="-scale-x-100" />
        <input
          aria-label="搜索"
          placeholder="搜索"
          className="ml-2 w-32 text-sm bg-transparent placeholder:text-[#5a5f58]"
        />
        <svg viewBox="0 0 36 26" className="ml-auto w-9 h-[26px]">
          <circle cx="14" cy="14" r="12" fill="#8a5a3c" />
          <circle cx="9" cy="9" r="5" fill="#b9dc6c" />
          <circle cx="17" cy="6" r="5" fill="#8cc63f" />
          <circle cx="20" cy="12" r="4" fill="#a8d45a" />
          <circle cx="8" cy="20" r="4" fill="#f3a6b8" />
          <circle cx="17" cy="19" r="5" fill="#d8a070" />
          <path d="M29 2l2 22M35 22L31 3" stroke="#8a5a2c" strokeWidth="1.500" />
        </svg>
      </div>
      <div className="ml-[13px] flex gap-5">
        {apps.map((a) => (
          <button key={a.name} aria-label={a.name} className="pt-[9px] h-10 flex flex-col items-center justify-between">
            <svg viewBox="0 0 24 24" className="w-6 h-6">
              {a.art}
            </svg>
            <span className={a.running ? "w-1.5 h-[3px] rounded-full bg-[#7a8577]" : "h-[3px]"} />
          </button>
        ))}
      </div>

      <div className="ml-auto flex items-center">
        <ChevronUp size={16} />
        <span className="ml-[13px] text-sm">中</span>
        <svg viewBox="0 0 16 16" className="ml-[23px] w-4 h-4">
          <rect width="16" height="16" rx="3" fill="#f05a22" />
          <path d="M12 4C4 2 3 7 8 8s4 5-4 4" stroke="#fff" strokeWidth="2" fill="none" />
        </svg>
        <svg viewBox="0 0 17 16" className="ml-[22px] w-[17px] h-4" fill="none" stroke="#111">
          <path d="M10 2H1v10h11V8M4 15h6M7 12v3M13 1h3v4h-3zM14.500 5v10h-4" />
        </svg>
        <svg viewBox="0 0 16 16" className="ml-2 w-4 h-4" fill="none" stroke="#111">
          <path d="M1 6h2l4-4v12M1 6v4h2l2 2" />
          <circle cx="11" cy="11" r="4.500" fill="#111" />
          <path d="M9 9l4 4M13 9l-4 4" stroke="#fff" />
        </svg>
        <div className="ml-2.5 w-[56px] text-right leading-4 font-['Open_Sans',sans-serif] text-[11px]">
          <div>16:13</div>
          <div>2025/8/11</div>
        </div>
        <span className="ml-1.5 w-4 h-4 rounded-full bg-[#0078d4] text-white text-[11px] leading-4 text-center">5</span>
      </div>
    </footer>
  );
}

/* ---------- page ---------- */

const menus = [["文件", "F"], ["辅助功能", "T"], ["数据库", ""], ["工具", ""], ["窗口", "W"], ["帮助", "H"]];
const tabs = ["工程信息", "分部分项", "措施项目", "其他项目", "工料机汇总", "取费文件", "报表打印"];

export default function App() {
  return (
    <div className={`relative h-screen overflow-hidden flex flex-col bg-[#f0f0f0] text-black text-xs ${uiFont}`}>
      <header className="h-[23px] shrink-0 flex items-center bg-white text-[#8f8f8f] font-['Inter','Noto_Sans_CJK_SC',sans-serif]">
        <AppLogo className="w-3 h-4" />
        <h1 className="ml-[5px] whitespace-pre">
          斯维尔清单计价 TH-BQ2016 标准版 - [D:\刘宇灵\刘宇灵\华晨建设小刘项目文件\松坪山生活区3#高低压配电室迁移（施工）结算资料 (2)\成果文件\最终审定版\松坪山生活区3#高低压配电室迁移工程-配电房.Qdy4]
        </h1>
        <div className="ml-auto mr-[18px] flex items-center gap-[34px]">
          <button aria-label="最小化"><Minus size={12} strokeWidth={1.500} /></button>
          <button aria-label="还原"><Copy size={11} strokeWidth={2} className="-scale-x-100" /></button>
          <button aria-label="关闭"><X size={14} strokeWidth={1.500} /></button>
        </div>
      </header>
      <nav className="h-[21px] shrink-0 flex items-center border-b border-[#a0a0a0] text-[#555] font-['Open_Sans','Noto_Sans_CJK_SC',sans-serif]">
        <AppLogo className="w-[15px] h-[17px]" />
        <div className="ml-[5px] flex gap-[15px]">
          {menus.map(([label, key]) => (
            <button key={label}>
              {label}
              {key && (
                <>
                  (<u>{key}</u>)
                </>
              )}
            </button>
          ))}
        </div>
        <div className="ml-auto flex gap-px text-[#8496a8]">
          <button aria-label="最小化子窗口" className="w-[18px] h-[18px] bg-[#e6e6e6] flex items-end justify-center pb-1.5">
            <span className="w-1.5 h-[2px] bg-[#8496a8]" />
          </button>
          <button aria-label="还原子窗口" className="w-[18px] h-[18px] bg-[#e6e6e6] flex items-center justify-center">
            <Copy size={9} strokeWidth={3} className="-scale-x-100" />
          </button>
          <button aria-label="关闭子窗口" className="w-[18px] h-[18px] bg-[#e6e6e6] flex items-center justify-center">
            <X size={10} strokeWidth={4} />
          </button>
        </div>
      </nav>

      <MainToolbar />

      <div className="h-[29px] shrink-0 flex items-center">
        {tabs.map((t, i) => (
          <Fragment key={t}>
            {i > 0 && <div className="w-px h-6 bg-[#a0a0a0]" />}
            {i === 1 ? (
              <button className="mx-[2px] w-[65px] h-[22px] rounded-[4px] border border-[#99cdf5] bg-[#cce6fb] text-[#0000f0] text-[13px] font-bold">
                {t}
              </button>
            ) : (
              <button className={`text-[13px] font-bold pr-2 ${i === 0 ? "pl-[7px]" : "pl-[9px]"}`}>{t}</button>
            )}
          </Fragment>
        ))}
        <div className="relative ml-auto mr-[9px] w-[334px]">
          <select aria-label="定额库" className="w-full h-[18px] pl-[2px] appearance-none bg-white border border-[#a0a0a0] text-[13px] leading-4 font-bold">
            <option>深圳市建筑工程消耗量定额(2016)</option>
          </select>
          <span className="absolute right-px top-px h-4 w-4 border border-[#c8c8c8] bg-white flex items-center justify-center pointer-events-none">
            <ChevronDown size={12} color="#555" />
          </span>
        </div>
      </div>

      <div className="flex-1 min-h-0 flex">
        <main className="flex-1 min-w-0 flex flex-col pr-px">
          <EditToolbar />
          <CostGrid />
          <DetailPane />
        </main>
        <Splitter />
        <CataloguePanel />
      </div>

      <div className="h-6 shrink-0 flex items-center border-t border-[#c8c8c8]">
        <div className="w-36 h-5 border-r border-[#c8c8c8]" />
        <p className="flex-1 flex pl-[556px] pt-px whitespace-pre">
          <span className="w-[138px]"><Mixed text="工程总造价: 156763.78" /></span>
          <span className="w-[114px]"><Mixed text="单方造价: 1297.28" /></span>
          <span className="w-[168px]"><Mixed text="技术支持电话: 400-0755-699" /></span>
          <span><Mixed text="操作提示: 在单元格内按空格键进入编辑状态" /></span>
        </p>
      </div>
      <TaskBar />

      <PinnedShot />
      <Annotation />
    </div>
  );
}
